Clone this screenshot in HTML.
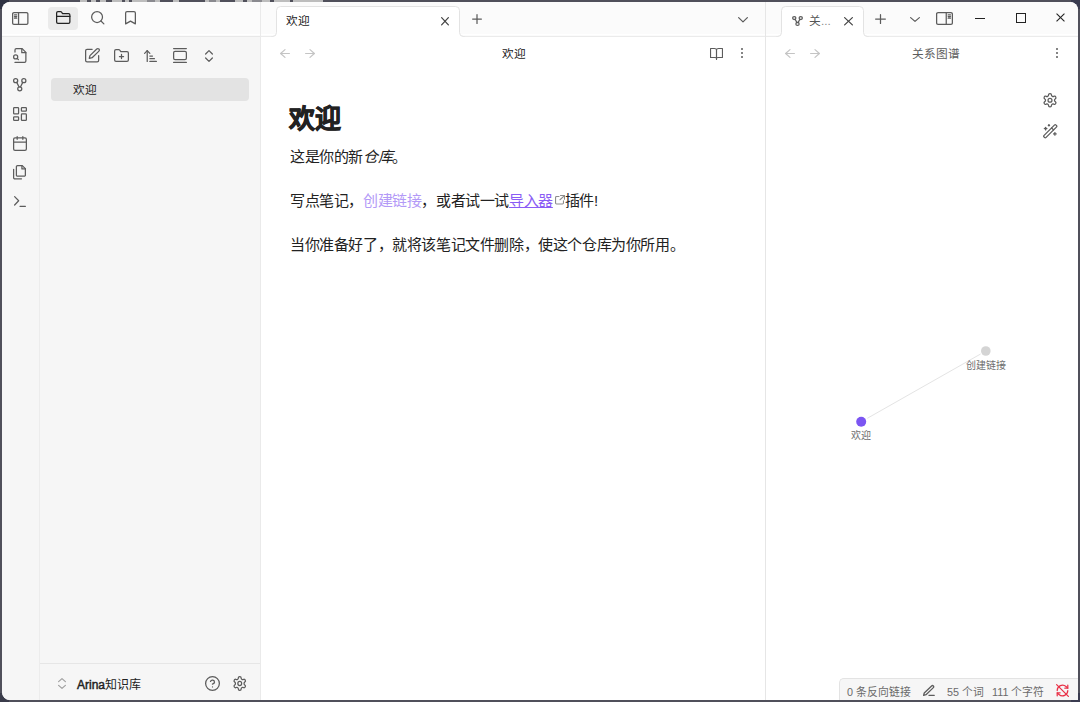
<!DOCTYPE html>
<html lang="zh-CN"><head><meta charset="utf-8">
<style>
html,body{margin:0;padding:0;width:1080px;height:702px;overflow:hidden;background:#50505b;font-family:"Liberation Sans",sans-serif;}
.abs{position:absolute}
.ic{position:absolute;overflow:visible}
#win{position:absolute;left:2px;top:2px;width:1076px;height:698px;border-radius:8px;overflow:hidden;background:#fff}
.t{position:absolute;white-space:nowrap;line-height:1}
</style></head><body>
<div class="abs" style="left:0;top:0;width:9px;height:9px;background:#2f3242"></div><div class="abs" style="left:1071px;top:0;width:9px;height:9px;background:#3a3c50"></div><div class="abs" style="left:1071px;top:693px;width:9px;height:9px;background:#3a3c50"></div><div class="abs" style="left:0;top:693px;width:9px;height:9px;background:#3a3c4a"></div><div id="win"></div>
<div class="abs" style="left:80px;top:0;width:7px;height:2px;background:#bdbdbd"></div><div class="abs" style="left:91px;top:0;width:5px;height:2px;background:#bdbdbd"></div><div class="abs" style="left:100px;top:0;width:6px;height:2px;background:#bdbdbd"></div><div class="abs" style="left:112px;top:0;width:10px;height:2px;background:#bdbdbd"></div><div class="abs" style="left:125px;top:0;width:4px;height:2px;background:#bdbdbd"></div><div class="abs" style="left:132px;top:0;width:15px;height:2px;background:#bdbdbd"></div><div class="abs" style="left:147px;top:0;width:8px;height:2px;background:#8a8a8f"></div><div class="abs" style="left:155px;top:0;width:5px;height:2px;background:#bdbdbd"></div><div class="abs" style="left:173px;top:0;width:6px;height:2px;background:#bdbdbd"></div><div class="abs" style="left:205px;top:0;width:4px;height:2px;background:#bdbdbd"></div><div class="abs" style="left:209px;top:0;width:7px;height:2px;background:#8a8a8f"></div><div class="abs" style="left:216px;top:0;width:4px;height:2px;background:#bdbdbd"></div><div class="abs" style="left:235px;top:0;width:8px;height:2px;background:#bdbdbd"></div><div class="abs" style="left:247px;top:0;width:5px;height:2px;background:#bdbdbd"></div><div class="abs" style="left:252px;top:0;width:10px;height:2px;background:#8a8a8f"></div><div class="abs" style="left:262px;top:0;width:8px;height:2px;background:#bdbdbd"></div><div class="abs" style="left:274px;top:0;width:16px;height:2px;background:#bdbdbd"></div><div class="abs" style="left:293px;top:0;width:30px;height:2px;background:#bdbdbd"></div>
<!-- header sidebar area -->
<div class="abs" style="left:2px;top:2px;width:259px;height:34px;background:#fbfbfb;border-top-left-radius:8px"></div>
<div class="abs" style="left:2px;top:34px;width:258px;height:1px;background:#fff"></div><div class="abs" style="left:2px;top:36px;width:258px;height:1px;background:#e8e8e8"></div>
<!-- ribbon -->
<div class="abs" style="left:2px;top:37px;width:37px;height:663px;background:#f6f6f6;border-bottom-left-radius:8px"></div>
<div class="abs" style="left:39px;top:37px;width:1px;height:663px;background:#ececec"></div>
<!-- sidebar -->
<div class="abs" style="left:40px;top:37px;width:220px;height:663px;background:#f6f6f6"></div>
<div class="abs" style="left:260px;top:2px;width:1px;height:698px;background:#eaeaea"></div>
<div class="abs" style="left:51px;top:78px;width:198px;height:23px;background:#e3e3e3;border-radius:4px"></div>
<div class="t" style="left:73px;top:84px;font-size:11.7px;color:#222">欢迎</div>
<div class="abs" style="left:40px;top:663px;width:220px;height:1px;background:#e6e6e6"></div>
<div class="t" style="left:77px;top:678.5px;font-size:12px;color:#222"><span style="-webkit-text-stroke:.45px #222">Arina</span>知识库</div>

<!-- main tab header -->
<div class="abs" style="left:261px;top:2px;width:504px;height:34px;background:#fbfbfb"></div>
<div class="abs" style="left:261px;top:34px;width:504px;height:1px;background:#fff"></div><div class="abs" style="left:261px;top:36px;width:504px;height:1px;background:#ebebeb"></div>
<svg class="abs" style="left:0;top:0" width="1080" height="40"><path d="M272.5 37 L272.5 36.5 A4 4 0 0 0 276.5 32.5 V10.5 A4 4 0 0 1 280.5 6.5 H455.5 A4 4 0 0 1 459.5 10.5 V32.5 A4 4 0 0 0 463.5 36.5 L463.5 37 Z" fill="#fff"/><path d="M271.5 36.5 H272.5 A4 4 0 0 0 276.5 32.5 V10.5 A4 4 0 0 1 280.5 6.5 H455.5 A4 4 0 0 1 459.5 10.5 V32.5 A4 4 0 0 0 463.5 36.5 H464.5" fill="none" stroke="#e3e3e3" stroke-width="1"/></svg>
<div class="t" style="left:286px;top:15px;font-size:11.7px;color:#222">欢迎</div>
<div class="t" style="left:502px;top:48px;font-size:11.7px;color:#222">欢迎</div>

<!-- divider -->
<div class="abs" style="left:765px;top:2px;width:1px;height:698px;background:#e6e6e6"></div>

<!-- right header -->
<div class="abs" style="left:766px;top:2px;width:312px;height:34px;background:#fbfbfb;border-top-right-radius:8px"></div>
<div class="abs" style="left:766px;top:34px;width:312px;height:1px;background:#fff"></div><div class="abs" style="left:766px;top:36px;width:312px;height:1px;background:#ebebeb"></div>
<svg class="abs" style="left:0;top:0" width="1080" height="40"><path d="M777.5 37 L777.5 36.5 A4 4 0 0 0 781.5 32.5 V10.5 A4 4 0 0 1 785.5 6.5 H859.5 A4 4 0 0 1 863.5 10.5 V32.5 A4 4 0 0 0 867.5 36.5 L867.5 37 Z" fill="#fff"/><path d="M776.5 36.5 H777.5 A4 4 0 0 0 781.5 32.5 V10.5 A4 4 0 0 1 785.5 6.5 H859.5 A4 4 0 0 1 863.5 10.5 V32.5 A4 4 0 0 0 867.5 36.5 H868.5" fill="none" stroke="#e3e3e3" stroke-width="1"/></svg>
<div class="t" style="left:809px;top:15px;font-size:11.7px;color:#555">关<span style="color:#888">...</span></div>
<div class="t" style="left:912px;top:48px;font-size:11.7px;color:#5c5c5c">关系图谱</div>

<!-- editor content -->
<div class="t" style="left:289px;top:105.5px;font-size:26px;font-weight:bold;color:#222;-webkit-text-stroke:.8px #222">欢迎</div>
<div class="t" style="left:290px;top:149px;font-size:15px;letter-spacing:-.4px;color:#222">这是你的新<i>仓库</i>。</div>
<div class="t" style="left:290px;top:193px;font-size:15px;letter-spacing:-.4px;color:#222">写点笔记，<span style="color:#b39af7">创建链接</span>，或者试一试<span style="color:#8a5cf5;text-decoration:underline">导入器</span><span style="display:inline-block;width:12px"></span>插件!</div>
<div class="t" style="left:290px;top:237px;font-size:15px;letter-spacing:-.4px;color:#222">当你准备好了，就将该笔记文件删除，使这个仓库为你所用。</div>

<!-- graph -->
<svg class="abs" style="left:0;top:0" width="1080" height="702">
<line x1="867.3" y1="418.3" x2="980.6" y2="354" stroke="#e4e4e4" stroke-width="1"/>
<circle cx="861.2" cy="421.8" r="5" fill="#7b55f2"/>
<circle cx="985.8" cy="351" r="4.8" fill="#d4d4d4"/>
</svg>
<div class="t" style="left:851px;top:431.3px;font-size:10px;color:#6e6e6e">欢迎</div>
<div class="t" style="left:966px;top:361.3px;font-size:10px;color:#6e6e6e">创建链接</div>

<!-- status bar -->
<div class="abs" style="left:839px;top:678px;width:239px;height:22px;background:#f6f6f6;border-top:1px solid #e3e3e3;border-left:1px solid #e3e3e3;border-top-left-radius:5px;box-sizing:border-box"></div>
<div class="t" style="left:847px;top:686.5px;font-size:10.8px;color:#6a6a6a">0 条反向链接</div>
<div class="t" style="left:947px;top:686.5px;font-size:10.8px;color:#6a6a6a">55 个词</div>
<div class="t" style="left:992px;top:686.5px;font-size:10.8px;color:#6a6a6a">111 个字符</div>

<svg class="ic" style="left:12px;top:12px;width:16.5px;height:13px;" viewBox="2.262 2.043 19.475 19.915" preserveAspectRatio="none" fill="none" stroke="#5c5c5c" stroke-width="1.25" stroke-linecap="round" stroke-linejoin="round"><rect x="3" y="3" width="18" height="18" rx="1.6" vector-effect="non-scaling-stroke"/><path d="M10 3v18" vector-effect="non-scaling-stroke"/><path d="M5.2 6.5h2.6M5.2 9h2.6M5.2 11.5h2.6" vector-effect="non-scaling-stroke"/></svg>
<div class="abs" style="left:48px;top:7px;width:30px;height:22.5px;background:#ebebeb;border-radius:4px"></div>
<svg class="ic" style="left:55.5px;top:11px;width:14.5px;height:13px;" viewBox="1.057 2.096 21.887 18.809" preserveAspectRatio="none" fill="none" stroke="#222" stroke-width="1.25" stroke-linecap="round" stroke-linejoin="round"><path d="M20 20a2 2 0 0 0 2-2V8a2 2 0 0 0-2-2h-7.9a2 2 0 0 1-1.69-.9L9.6 3.9A2 2 0 0 0 7.93 3H4a2 2 0 0 0-2 2v13a2 2 0 0 0 2 2Z" vector-effect="non-scaling-stroke"/><path d="M2 10h20" vector-effect="non-scaling-stroke"/></svg>
<svg class="ic" style="left:90.5px;top:11px;width:13.5px;height:13.5px;" viewBox="2.082 2.082 19.837 19.837" preserveAspectRatio="none" fill="none" stroke="#5c5c5c" stroke-width="1.25" stroke-linecap="round" stroke-linejoin="round"><circle cx="11" cy="11" r="8" vector-effect="non-scaling-stroke"/><path d="m21 21-4.3-4.3" vector-effect="non-scaling-stroke"/></svg>
<svg class="ic" style="left:125px;top:11px;width:11px;height:13.5px;" viewBox="4.103 2.082 15.795 19.837" preserveAspectRatio="none" fill="none" stroke="#5c5c5c" stroke-width="1.25" stroke-linecap="round" stroke-linejoin="round"><path d="m19 21-7-4-7 4V5a2 2 0 0 1 2-2h10a2 2 0 0 1 2 2v16z" vector-effect="non-scaling-stroke"/></svg>
<svg class="ic" style="left:12.5px;top:48px;width:13.5px;height:15px;" viewBox="1.082 1.091 19.837 21.818" preserveAspectRatio="none" fill="none" stroke="#5c5c5c" stroke-width="1.25" stroke-linecap="round" stroke-linejoin="round"><path d="M4 22h14a2 2 0 0 0 2-2V7.5L14.5 2H6a2 2 0 0 0-2 2v3" vector-effect="non-scaling-stroke"/><path d="M14 2v6h6" vector-effect="non-scaling-stroke"/><path d="M5 17a3 3 0 1 0 0-6 3 3 0 0 0 0 6z" vector-effect="non-scaling-stroke"/><path d="m9 18-1.5-1.5" vector-effect="non-scaling-stroke"/></svg>
<svg class="ic" style="left:13px;top:78px;width:13.5px;height:13.5px;" viewBox="2.082 2.082 19.837 19.837" preserveAspectRatio="none" fill="none" stroke="#5c5c5c" stroke-width="1.25" stroke-linecap="round" stroke-linejoin="round"><circle cx="12" cy="18" r="3" vector-effect="non-scaling-stroke"/><circle cx="6" cy="6" r="3" vector-effect="non-scaling-stroke"/><circle cx="18" cy="6" r="3" vector-effect="non-scaling-stroke"/><path d="M7.6 8.5 11 15.3" vector-effect="non-scaling-stroke"/><path d="M16.4 8.5 13 15.3" vector-effect="non-scaling-stroke"/></svg>
<svg class="ic" style="left:13px;top:107px;width:14px;height:14px;" viewBox="2.118 2.118 19.765 19.765" preserveAspectRatio="none" fill="none" stroke="#5c5c5c" stroke-width="1.25" stroke-linecap="round" stroke-linejoin="round"><rect width="7" height="9" x="3" y="3" rx="1" vector-effect="non-scaling-stroke"/><rect width="7" height="5" x="14" y="3" rx="1" vector-effect="non-scaling-stroke"/><rect width="7" height="9" x="14" y="12" rx="1" vector-effect="non-scaling-stroke"/><rect width="7" height="5" x="3" y="16" rx="1" vector-effect="non-scaling-stroke"/></svg>
<svg class="ic" style="left:13px;top:136px;width:14px;height:15px;" viewBox="2.118 1.091 19.765 21.818" preserveAspectRatio="none" fill="none" stroke="#5c5c5c" stroke-width="1.25" stroke-linecap="round" stroke-linejoin="round"><rect width="18" height="18" x="3" y="4" rx="2" vector-effect="non-scaling-stroke"/><path d="M16 2v4M8 2v4M3 10h18" vector-effect="non-scaling-stroke"/></svg>
<svg class="ic" style="left:13px;top:165px;width:13px;height:14.5px;" viewBox="2.096 1.057 18.809 21.887" preserveAspectRatio="none" fill="none" stroke="#5c5c5c" stroke-width="1.25" stroke-linecap="round" stroke-linejoin="round"><path d="M15.5 2H8.6c-.4 0-.8.2-1.1.5-.3.3-.5.7-.5 1.1v12.8c0 .4.2.8.5 1.1.3.3.7.5 1.1.5h9.8c.4 0 .8-.2 1.1-.5.3-.3.5-.7.5-1.1V6.5L15.5 2z" vector-effect="non-scaling-stroke"/><path d="M3 7.6v12.8c0 .4.2.8.5 1.1.3.3.7.5 1.1.5h9.8" vector-effect="non-scaling-stroke"/><path d="M15 2v5h5" vector-effect="non-scaling-stroke"/></svg>
<svg class="ic" style="left:14px;top:196px;width:12px;height:11px;" viewBox="3.070 4.103 17.860 15.795" preserveAspectRatio="none" fill="none" stroke="#5c5c5c" stroke-width="1.25" stroke-linecap="round" stroke-linejoin="round"><path d="M4 17l6-6-6-6" vector-effect="non-scaling-stroke"/><path d="M12 19h8" vector-effect="non-scaling-stroke"/></svg>
<svg class="ic" style="left:85px;top:48px;width:15px;height:14.5px;" viewBox="2.136 1.104 20.727 20.792" preserveAspectRatio="none" fill="none" stroke="#5c5c5c" stroke-width="1.25" stroke-linecap="round" stroke-linejoin="round"><path d="M12 3H5a2 2 0 0 0-2 2v14a2 2 0 0 0 2 2h14a2 2 0 0 0 2-2v-7" vector-effect="non-scaling-stroke"/><path d="M18.375 2.625a2.121 2.121 0 1 1 3 3L12 15l-4 1 1-4Z" vector-effect="non-scaling-stroke"/></svg>
<svg class="ic" style="left:114px;top:49px;width:15px;height:13px;" viewBox="1.091 2.096 21.818 18.809" preserveAspectRatio="none" fill="none" stroke="#5c5c5c" stroke-width="1.25" stroke-linecap="round" stroke-linejoin="round"><path d="M4 20h16a2 2 0 0 0 2-2V8a2 2 0 0 0-2-2h-7.93a2 2 0 0 1-1.66-.9l-.82-1.2A2 2 0 0 0 7.93 3H4a2 2 0 0 0-2 2v13c0 1.1.9 2 2 2Z" vector-effect="non-scaling-stroke"/><path d="M12 10v6M9 13h6" vector-effect="non-scaling-stroke"/></svg>
<svg class="ic" style="left:144px;top:49.5px;width:13px;height:12.0px;" viewBox="2.043 3.070 19.915 17.860" preserveAspectRatio="none" fill="none" stroke="#5c5c5c" stroke-width="1.25" stroke-linecap="round" stroke-linejoin="round"><path d="m3 8 4-4 4 4" vector-effect="non-scaling-stroke"/><path d="M7 4v16" vector-effect="non-scaling-stroke"/><path d="M11 12h4" vector-effect="non-scaling-stroke"/><path d="M11 16h7" vector-effect="non-scaling-stroke"/><path d="M11 20h10" vector-effect="non-scaling-stroke"/></svg>
<svg class="ic" style="left:173px;top:48px;width:14px;height:15px;" viewBox="2.118 1.091 19.765 21.818" preserveAspectRatio="none" fill="none" stroke="#5c5c5c" stroke-width="1.25" stroke-linecap="round" stroke-linejoin="round"><path d="M3 2h18" vector-effect="non-scaling-stroke"/><rect width="18" height="12" x="3" y="6" rx="2" vector-effect="non-scaling-stroke"/><path d="M3 22h18" vector-effect="non-scaling-stroke"/></svg>
<svg class="ic" style="left:205px;top:50px;width:8px;height:12px;" viewBox="6.074 3.070 11.852 17.860" preserveAspectRatio="none" fill="none" stroke="#5c5c5c" stroke-width="1.25" stroke-linecap="round" stroke-linejoin="round"><path d="m7 15 5 5 5-5" vector-effect="non-scaling-stroke"/><path d="m7 9 5-5 5 5" vector-effect="non-scaling-stroke"/></svg>
<svg class="ic" style="left:58px;top:678px;width:8px;height:11px;" viewBox="6.118 3.020 11.765 17.959" preserveAspectRatio="none" fill="none" stroke="#a0a0a0" stroke-width="1.2" stroke-linecap="round" stroke-linejoin="round"><path d="m7 15 5 5 5-5" vector-effect="non-scaling-stroke"/><path d="m7 9 5-5 5 5" vector-effect="non-scaling-stroke"/></svg>
<svg class="ic" style="left:205px;top:676px;width:15px;height:15px;" viewBox="1.091 1.091 21.818 21.818" preserveAspectRatio="none" fill="none" stroke="#5c5c5c" stroke-width="1.25" stroke-linecap="round" stroke-linejoin="round"><circle cx="12" cy="12" r="10" vector-effect="non-scaling-stroke"/><path d="M9.09 9a3 3 0 0 1 5.83 1c0 2-3 3-3 3" vector-effect="non-scaling-stroke"/><path d="M12 17h.01" vector-effect="non-scaling-stroke"/></svg>
<svg class="ic" style="left:232.5px;top:676px;width:13.5px;height:15px;" viewBox="1.310 1.091 21.380 21.818" preserveAspectRatio="none" fill="none" stroke="#5c5c5c" stroke-width="1.25" stroke-linecap="round" stroke-linejoin="round"><path d="M12.22 2h-.44a2 2 0 0 0-2 2v.18a2 2 0 0 1-1 1.73l-.43.25a2 2 0 0 1-2 0l-.15-.08a2 2 0 0 0-2.73.73l-.22.38a2 2 0 0 0 .73 2.73l.15.1a2 2 0 0 1 1 1.72v.51a2 2 0 0 1-1 1.74l-.15.09a2 2 0 0 0-.73 2.73l.22.38a2 2 0 0 0 2.73.73l.15-.08a2 2 0 0 1 2 0l.43.25a2 2 0 0 1 1 1.73V20a2 2 0 0 0 2 2h.44a2 2 0 0 0 2-2v-.18a2 2 0 0 1 1-1.73l.43-.25a2 2 0 0 1 2 0l.15.08a2 2 0 0 0 2.73-.73l.22-.39a2 2 0 0 0-.73-2.73l-.15-.08a2 2 0 0 1-1-1.74v-.5a2 2 0 0 1 1-1.74l.15-.09a2 2 0 0 0 .73-2.73l-.22-.38a2 2 0 0 0-2.73-.73l-.15.08a2 2 0 0 1-2 0l-.43-.25a2 2 0 0 1-1-1.73V4a2 2 0 0 0-2-2z" vector-effect="non-scaling-stroke"/><circle cx="12" cy="12" r="3" vector-effect="non-scaling-stroke"/></svg>
<svg class="ic" style="left:441px;top:16.5px;width:8px;height:8.5px;" viewBox="4.889 4.966 14.222 14.069" preserveAspectRatio="none" fill="none" stroke="#444" stroke-width="1.25" stroke-linecap="round" stroke-linejoin="round"><path d="M18 6 6 18" vector-effect="non-scaling-stroke"/><path d="m6 6 12 12" vector-effect="non-scaling-stroke"/></svg>
<svg class="ic" style="left:472px;top:14px;width:10px;height:10px;" viewBox="4.000 4.000 16.000 16.000" preserveAspectRatio="none" fill="none" stroke="#5c5c5c" stroke-width="1.25" stroke-linecap="round" stroke-linejoin="round"><path d="M5 12h14" vector-effect="non-scaling-stroke"/><path d="M12 5v14" vector-effect="non-scaling-stroke"/></svg>
<svg class="ic" style="left:738px;top:16.5px;width:10px;height:5.5px;" viewBox="5.143 8.118 13.714 7.765" preserveAspectRatio="none" fill="none" stroke="#5c5c5c" stroke-width="1.25" stroke-linecap="round" stroke-linejoin="round"><path d="m6 9 6 6 6-6" vector-effect="non-scaling-stroke"/></svg>
<svg class="ic" style="left:280px;top:49px;width:10px;height:9px;" viewBox="4.045 3.923 15.909 16.154" preserveAspectRatio="none" fill="none" stroke="#c4c4c4" stroke-width="1.2" stroke-linecap="round" stroke-linejoin="round"><path d="m12 19-7-7 7-7" vector-effect="non-scaling-stroke"/><path d="M19 12H5" vector-effect="non-scaling-stroke"/></svg>
<svg class="ic" style="left:305px;top:49px;width:10px;height:9px;" viewBox="4.045 3.923 15.909 16.154" preserveAspectRatio="none" fill="none" stroke="#c4c4c4" stroke-width="1.2" stroke-linecap="round" stroke-linejoin="round"><path d="M5 12h14" vector-effect="non-scaling-stroke"/><path d="m12 5 7 7-7 7" vector-effect="non-scaling-stroke"/></svg>
<svg class="ic" style="left:710px;top:47.5px;width:13px;height:12.0px;" viewBox="1.076 2.041 21.849 20.917" preserveAspectRatio="none" fill="none" stroke="#5c5c5c" stroke-width="1.1" stroke-linecap="round" stroke-linejoin="round"><path d="M2 3h6.5c2 0 3.5 1 3.5 2.5V20c0-1-1.5-1.5-3-1.5H2z" vector-effect="non-scaling-stroke"/><path d="M22 3h-6.5c-2 0-3.5 1-3.5 2.5V20c0-1 1.5-1.5 3-1.5H22z" vector-effect="non-scaling-stroke"/><path d="M12 19v3" vector-effect="non-scaling-stroke"/></svg>
<div class="abs" style="left:741.1500000000001px;top:47.75px;width:2.1px;height:2.1px;border-radius:50%;background:#5c5c5c"></div><div class="abs" style="left:741.1500000000001px;top:51.95px;width:2.1px;height:2.1px;border-radius:50%;background:#5c5c5c"></div><div class="abs" style="left:741.1500000000001px;top:56.150000000000006px;width:2.1px;height:2.1px;border-radius:50%;background:#5c5c5c"></div>
<svg class="ic" style="left:792px;top:16px;width:11px;height:10px;" viewBox="1.846 1.714 20.308 20.571" preserveAspectRatio="none" fill="none" stroke="#5c5c5c" stroke-width="1.25" stroke-linecap="round" stroke-linejoin="round"><circle cx="12" cy="18" r="3" vector-effect="non-scaling-stroke"/><circle cx="6" cy="6" r="3" vector-effect="non-scaling-stroke"/><circle cx="18" cy="6" r="3" vector-effect="non-scaling-stroke"/><path d="M7.6 8.5 11 15.3" vector-effect="non-scaling-stroke"/><path d="M16.4 8.5 13 15.3" vector-effect="non-scaling-stroke"/></svg>
<svg class="ic" style="left:844px;top:16.5px;width:9px;height:8.5px;" viewBox="5.032 4.966 13.935 14.069" preserveAspectRatio="none" fill="none" stroke="#444" stroke-width="1.25" stroke-linecap="round" stroke-linejoin="round"><path d="M18 6 6 18" vector-effect="non-scaling-stroke"/><path d="m6 6 12 12" vector-effect="non-scaling-stroke"/></svg>
<svg class="ic" style="left:875px;top:14px;width:11px;height:10px;" viewBox="4.103 4.000 15.795 16.000" preserveAspectRatio="none" fill="none" stroke="#5c5c5c" stroke-width="1.25" stroke-linecap="round" stroke-linejoin="round"><path d="M5 12h14" vector-effect="non-scaling-stroke"/><path d="M12 5v14" vector-effect="non-scaling-stroke"/></svg>
<svg class="ic" style="left:910px;top:17px;width:10px;height:5px;" viewBox="5.143 8.000 13.714 8.000" preserveAspectRatio="none" fill="none" stroke="#5c5c5c" stroke-width="1.25" stroke-linecap="round" stroke-linejoin="round"><path d="m6 9 6 6 6-6" vector-effect="non-scaling-stroke"/></svg>
<svg class="ic" style="left:936px;top:12px;width:17px;height:13px;" viewBox="2.286 2.043 19.429 19.915" preserveAspectRatio="none" fill="none" stroke="#5c5c5c" stroke-width="1.25" stroke-linecap="round" stroke-linejoin="round"><rect x="3" y="3" width="18" height="18" rx="1.6" vector-effect="non-scaling-stroke"/><path d="M14 3v18" vector-effect="non-scaling-stroke"/><path d="M16.2 6.5h2.6M16.2 9h2.6M16.2 11.5h2.6" vector-effect="non-scaling-stroke"/></svg>
<div class="abs" style="left:975px;top:17.5px;width:10px;height:1.1px;background:#222"></div>
<div class="abs" style="left:1016px;top:13px;width:9.5px;height:9.5px;border:1.1px solid #222;box-sizing:border-box"></div>
<svg class="ic" style="left:1056px;top:13px;width:9px;height:9px;" viewBox="5.165 5.165 13.671 13.671" preserveAspectRatio="none" fill="none" stroke="#222" stroke-width="1.1" stroke-linecap="butt" stroke-linejoin="round"><path d="M18 6 6 18" vector-effect="non-scaling-stroke"/><path d="m6 6 12 12" vector-effect="non-scaling-stroke"/></svg>
<svg class="ic" style="left:785px;top:49px;width:10px;height:9px;" viewBox="4.045 3.923 15.909 16.154" preserveAspectRatio="none" fill="none" stroke="#c4c4c4" stroke-width="1.2" stroke-linecap="round" stroke-linejoin="round"><path d="m12 19-7-7 7-7" vector-effect="non-scaling-stroke"/><path d="M19 12H5" vector-effect="non-scaling-stroke"/></svg>
<svg class="ic" style="left:810px;top:49px;width:10px;height:9px;" viewBox="4.045 3.923 15.909 16.154" preserveAspectRatio="none" fill="none" stroke="#c4c4c4" stroke-width="1.2" stroke-linecap="round" stroke-linejoin="round"><path d="M5 12h14" vector-effect="non-scaling-stroke"/><path d="m12 5 7 7-7 7" vector-effect="non-scaling-stroke"/></svg>
<div class="abs" style="left:1056.15px;top:47.75px;width:2.1px;height:2.1px;border-radius:50%;background:#5c5c5c"></div><div class="abs" style="left:1056.15px;top:51.95px;width:2.1px;height:2.1px;border-radius:50%;background:#5c5c5c"></div><div class="abs" style="left:1056.15px;top:56.150000000000006px;width:2.1px;height:2.1px;border-radius:50%;background:#5c5c5c"></div>
<svg class="ic" style="left:1043px;top:93px;width:14px;height:14.5px;" viewBox="1.349 1.057 21.302 21.887" preserveAspectRatio="none" fill="none" stroke="#5c5c5c" stroke-width="1.25" stroke-linecap="round" stroke-linejoin="round"><path d="M12.22 2h-.44a2 2 0 0 0-2 2v.18a2 2 0 0 1-1 1.73l-.43.25a2 2 0 0 1-2 0l-.15-.08a2 2 0 0 0-2.73.73l-.22.38a2 2 0 0 0 .73 2.73l.15.1a2 2 0 0 1 1 1.72v.51a2 2 0 0 1-1 1.74l-.15.09a2 2 0 0 0-.73 2.73l.22.38a2 2 0 0 0 2.73.73l.15-.08a2 2 0 0 1 2 0l.43.25a2 2 0 0 1 1 1.73V20a2 2 0 0 0 2 2h.44a2 2 0 0 0 2-2v-.18a2 2 0 0 1 1-1.73l.43-.25a2 2 0 0 1 2 0l.15.08a2 2 0 0 0 2.73-.73l.22-.39a2 2 0 0 0-.73-2.73l-.15-.08a2 2 0 0 1-1-1.74v-.5a2 2 0 0 1 1-1.74l.15-.09a2 2 0 0 0 .73-2.73l-.22-.38a2 2 0 0 0-2.73-.73l-.15.08a2 2 0 0 1-2 0l-.43-.25a2 2 0 0 1-1-1.73V4a2 2 0 0 0-2-2z" vector-effect="non-scaling-stroke"/><circle cx="12" cy="12" r="3" vector-effect="non-scaling-stroke"/></svg>
<svg class="ic" style="left:1042.5px;top:123.5px;width:14.5px;height:14.5px;" viewBox="1.057 1.057 21.887 21.887" preserveAspectRatio="none" fill="none" stroke="#5c5c5c" stroke-width="1.25" stroke-linecap="round" stroke-linejoin="round"><path d="m21.64 3.64-1.28-1.28a1.21 1.21 0 0 0-1.72 0L2.36 18.64a1.21 1.21 0 0 0 0 1.72l1.28 1.28a1.2 1.2 0 0 0 1.72 0L21.64 5.36a1.2 1.2 0 0 0 0-1.72Z" vector-effect="non-scaling-stroke"/><path d="m14 7 3 3" vector-effect="non-scaling-stroke"/><path d="M5 6v4" vector-effect="non-scaling-stroke"/><path d="M19 14v4" vector-effect="non-scaling-stroke"/><path d="M10 2v2" vector-effect="non-scaling-stroke"/><path d="M7 8H3" vector-effect="non-scaling-stroke"/><path d="M21 16h-4" vector-effect="non-scaling-stroke"/><path d="M11 3H9" vector-effect="non-scaling-stroke"/></svg>
<svg class="ic" style="left:555px;top:195px;width:10px;height:9.5px;" viewBox="1.888 1.821 20.225 20.357" preserveAspectRatio="none" fill="none" stroke="#8c8c8c" stroke-width="1.1" stroke-linecap="round" stroke-linejoin="round"><path d="M13 3h8v8" vector-effect="non-scaling-stroke"/><path d="M21 3l-9 9" vector-effect="non-scaling-stroke"/><path d="M19 14v5a2 2 0 0 1-2 2H5a2 2 0 0 1-2-2V7a2 2 0 0 1 2-2h5" vector-effect="non-scaling-stroke"/></svg>
<svg class="ic" style="left:922.5px;top:685px;width:11.899999999999977px;height:11.5px;" viewBox="1.896 1.853 20.208 20.294" preserveAspectRatio="none" fill="none" stroke="#5c5c5c" stroke-width="1.3" stroke-linecap="round" stroke-linejoin="round"><path d="M12 20h9" vector-effect="non-scaling-stroke"/><path d="M16.5 3.5a2.12 2.12 0 0 1 3 3L7 19l-4 1 1-4Z" vector-effect="non-scaling-stroke"/></svg>
<svg class="ic" style="left:1056px;top:684px;width:13px;height:13px;" viewBox="0.936 0.936 22.128 22.128" preserveAspectRatio="none" fill="none" stroke="#e93147" stroke-width="1.25" stroke-linecap="round" stroke-linejoin="round"><path d="M3 12a9 9 0 0 1 15-6.7L21 8" vector-effect="non-scaling-stroke"/><path d="M21 3v5h-5" vector-effect="non-scaling-stroke"/><path d="M21 12a9 9 0 0 1-15 6.7L3 16" vector-effect="non-scaling-stroke"/><path d="M3 21v-5h5" vector-effect="non-scaling-stroke"/><path d="M2 2l20 20" vector-effect="non-scaling-stroke"/></svg>
</body></html>
